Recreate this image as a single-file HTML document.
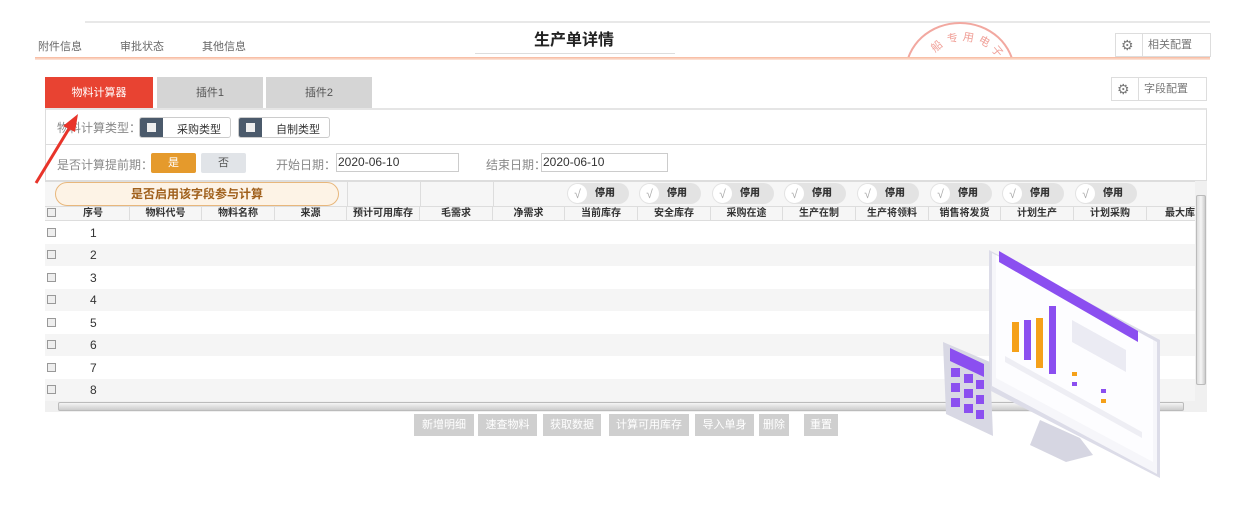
<!DOCTYPE html>
<html><head><meta charset="utf-8"><style>
*{margin:0;padding:0;box-sizing:border-box}
body{width:1235px;height:519px;background:#fff;position:relative;overflow:hidden;font-family:"Liberation Sans","Noto Sans CJK SC",sans-serif;font-size:11px;color:#333}
.a{position:absolute}
.nav{top:38px;color:#666;font-size:11px}
.tab{top:77px;height:32px;line-height:32px;text-align:center;font-size:11px}
.th{position:absolute;top:206px;height:15px;line-height:15px;font-weight:bold;font-size:10px;text-align:center;border-right:1px solid #ddd}
.tg{position:absolute;top:183px;width:62px;height:21px;border-radius:11px;background:#e3e3e3;font-weight:bold;font-size:10px;line-height:21px}
.tg i{position:absolute;left:1px;top:1px;width:19px;height:19px;border-radius:50%;background:#fff;color:#aaa;font-style:normal;text-align:center;font-weight:normal;font-size:12px}
.tg b{position:absolute;left:28px}
.btn{position:absolute;top:414px;height:22px;line-height:22px;background:#cfcfcf;color:#fff;text-align:center;font-size:11px}
.cb{position:absolute;left:47px;width:9px;height:9px;border:1px solid #999;background:#eee}
</style></head><body>
<div class="a" style="left:85px;top:21px;width:1125px;height:2px;background:#e8e8e8"></div>
<div class="a nav" style="left:38px">附件信息</div>
<div class="a nav" style="left:120px">审批状态</div>
<div class="a nav" style="left:202px">其他信息</div>
<div class="a" style="left:534px;top:26px;font-size:16px;font-weight:bold;color:#222">生产单详情</div>
<div class="a" style="left:475px;top:53px;width:200px;height:1px;background:#ddd"></div>
<div class="a" style="left:905px;top:22px;width:110px;height:100px;border:2px solid #f2a8a0;border-radius:50%;clip-path:inset(0 0 64px 0);color:#f0a098;font-size:11px">
<span style="position:absolute;left:24px;top:14px;transform:rotate(-40deg)">船</span><span style="position:absolute;left:40px;top:6px;transform:rotate(-15deg)">专</span><span style="position:absolute;left:56px;top:5px;transform:rotate(10deg)">用</span><span style="position:absolute;left:72px;top:9px;transform:rotate(30deg)">电</span><span style="position:absolute;left:85px;top:19px;transform:rotate(50deg)">子</span></div>
<div class="a" style="left:35px;top:57px;width:1175px;height:3px;background:linear-gradient(#f7b79c,#fde8de)"></div>
<div class="a" style="left:1115px;top:33px;width:96px;height:24px;border:1px solid #ddd;color:#777;line-height:22px"><span style="position:absolute;left:5px;font-size:14px">⚙</span><span style="position:absolute;left:26px;border-left:1px solid #ddd;padding-left:5px">相关配置</span></div>
<div class="a tab" style="left:45px;width:108px;background:#e84332;color:#fff">物料计算器</div>
<div class="a tab" style="left:157px;width:106px;background:#d5d5d5;color:#555">插件1</div>
<div class="a tab" style="left:266px;width:106px;background:#d5d5d5;color:#555">插件2</div>
<div class="a" style="left:1111px;top:77px;width:96px;height:24px;border:1px solid #ddd;color:#777;line-height:22px"><span style="position:absolute;left:5px;font-size:14px">⚙</span><span style="position:absolute;left:26px;border-left:1px solid #ddd;padding-left:5px">字段配置</span></div>
<div class="a" style="left:45px;top:108px;width:1162px;height:73px;border:1px solid #ddd;border-top:2px solid #e5e5e5"></div>
<div class="a" style="left:45px;top:144px;width:1162px;height:1px;background:#ddd"></div>
<div class="a" style="left:57px;top:119px;color:#888;font-size:12px">物料计算类型：</div>
<div class="a" style="left:139px;top:117px;width:92px;height:21px;border:1px solid #ccc;border-radius:3px;background:#fff"><div style="position:absolute;left:0;top:0;width:23px;height:19px;background:#4b5a6b;border-radius:2px 0 0 2px"><div style="margin:5px 7px;width:9px;height:9px;background:#eee"></div></div><span style="position:absolute;left:37px;top:3px">采购类型</span></div>
<div class="a" style="left:238px;top:117px;width:92px;height:21px;border:1px solid #ccc;border-radius:3px;background:#fff"><div style="position:absolute;left:0;top:0;width:23px;height:19px;background:#4b5a6b;border-radius:2px 0 0 2px"><div style="margin:5px 7px;width:9px;height:9px;background:#eee"></div></div><span style="position:absolute;left:37px;top:3px">自制类型</span></div>
<div class="a" style="left:57px;top:156px;color:#888;font-size:12px">是否计算提前期：</div>
<div class="a" style="left:151px;top:153px;width:45px;height:20px;background:#e59a2c;color:#fff;text-align:center;line-height:20px;border-radius:2px">是</div>
<div class="a" style="left:201px;top:153px;width:45px;height:20px;background:#e1e4e8;color:#555;text-align:center;line-height:20px;border-radius:2px">否</div>
<div class="a" style="left:276px;top:156px;color:#888;font-size:12px">开始日期：</div>
<div class="a" style="left:336px;top:153px;width:123px;height:19px;border:1px solid #ccc;font-size:12px;line-height:17px;padding-left:1px">2020-06-10</div>
<div class="a" style="left:486px;top:156px;color:#888;font-size:12px">结束日期：</div>
<div class="a" style="left:541px;top:153px;width:127px;height:19px;border:1px solid #ccc;font-size:12px;line-height:17px;padding-left:1px">2020-06-10</div>
<div class="a" style="left:45px;top:181px;width:1162px;height:40px;background:#f6f6f6;border-top:1px solid #ddd;border-bottom:1px solid #ddd"></div>
<div class="a" style="left:45px;top:206px;width:1150px;height:1px;background:#ddd"></div>
<div class="a" style="left:55px;top:182px;width:284px;height:24px;border:1px solid #e8b77c;border-radius:12px;background:#fdf3e6;color:#a0601c;font-weight:bold;font-size:12px;text-align:center;line-height:22px">是否启用该字段参与计算</div>
<div class="cb" style="top:208px"></div>
<div class="th" style="left:57px;width:73px">序号</div>
<div class="th" style="left:130px;width:72px">物料代号</div>
<div class="th" style="left:202px;width:73px">物料名称</div>
<div class="th" style="left:275px;width:72px">来源</div>
<div class="th" style="left:347px;width:73px">预计可用库存</div>
<div class="th" style="left:420px;width:73px">毛需求</div>
<div class="th" style="left:493px;width:72px">净需求</div>
<div class="th" style="left:565px;width:73px">当前库存</div>
<div class="th" style="left:638px;width:73px">安全库存</div>
<div class="th" style="left:711px;width:72px">采购在途</div>
<div class="th" style="left:783px;width:73px">生产在制</div>
<div class="th" style="left:856px;width:73px">生产将领料</div>
<div class="th" style="left:929px;width:72px">销售将发货</div>
<div class="th" style="left:1001px;width:73px">计划生产</div>
<div class="th" style="left:1074px;width:73px">计划采购</div>
<div class="th" style="left:1147px;width:48px;text-align:right;border:none">最大库</div>
<div class="a" style="left:347px;top:182px;width:1px;height:24px;background:#ddd"></div>
<div class="a" style="left:420px;top:182px;width:1px;height:24px;background:#ddd"></div>
<div class="a" style="left:493px;top:182px;width:1px;height:24px;background:#ddd"></div>
<div class="tg" style="left:567px"><i>√</i><b>停用</b></div>
<div class="tg" style="left:639px"><i>√</i><b>停用</b></div>
<div class="tg" style="left:712px"><i>√</i><b>停用</b></div>
<div class="tg" style="left:784px"><i>√</i><b>停用</b></div>
<div class="tg" style="left:857px"><i>√</i><b>停用</b></div>
<div class="tg" style="left:930px"><i>√</i><b>停用</b></div>
<div class="tg" style="left:1002px"><i>√</i><b>停用</b></div>
<div class="tg" style="left:1075px"><i>√</i><b>停用</b></div>
<div class="a" style="left:45px;top:244px;width:1150px;height:22px;background:#f5f5f5"></div>
<div class="a" style="left:45px;top:289px;width:1150px;height:22px;background:#f5f5f5"></div>
<div class="a" style="left:45px;top:334px;width:1150px;height:22px;background:#f5f5f5"></div>
<div class="a" style="left:45px;top:379px;width:1150px;height:22px;background:#f5f5f5"></div>
<div class="cb" style="top:228px"></div><div class="a" style="left:90px;top:226px;font-size:12px">1</div>
<div class="cb" style="top:250px"></div><div class="a" style="left:90px;top:248px;font-size:12px">2</div>
<div class="cb" style="top:273px"></div><div class="a" style="left:90px;top:271px;font-size:12px">3</div>
<div class="cb" style="top:295px"></div><div class="a" style="left:90px;top:293px;font-size:12px">4</div>
<div class="cb" style="top:318px"></div><div class="a" style="left:90px;top:316px;font-size:12px">5</div>
<div class="cb" style="top:340px"></div><div class="a" style="left:90px;top:338px;font-size:12px">6</div>
<div class="cb" style="top:363px"></div><div class="a" style="left:90px;top:361px;font-size:12px">7</div>
<div class="cb" style="top:385px"></div><div class="a" style="left:90px;top:383px;font-size:12px">8</div>
<div class="a" style="left:1195px;top:181px;width:12px;height:220px;background:#f0f0f0"></div>
<div class="a" style="left:1196px;top:195px;width:10px;height:190px;background:linear-gradient(90deg,#ddd,#f5f5f5,#ccc);border:1px solid #bbb;border-radius:2px"></div>
<div class="a" style="left:45px;top:401px;width:1162px;height:11px;background:#f0f0f0"></div>
<div class="a" style="left:58px;top:402px;width:1126px;height:9px;background:linear-gradient(#f5f5f5,#ccc);border:1px solid #bbb;border-radius:2px"></div>
<div class="btn" style="left:414px;width:60px">新增明细</div>
<div class="btn" style="left:478px;width:59px">速查物料</div>
<div class="btn" style="left:543px;width:58px">获取数据</div>
<div class="btn" style="left:609px;width:80px">计算可用库存</div>
<div class="btn" style="left:695px;width:59px">导入单身</div>
<div class="btn" style="left:759px;width:30px">删除</div>
<div class="btn" style="left:804px;width:34px">重置</div>
<svg class="a" style="left:0;top:0" width="1235" height="519">
<line x1="36" y1="183" x2="70" y2="127" stroke="#e8342a" stroke-width="3"/>
<polygon points="78,114 63,126 75,132" fill="#e8342a"/>
<polygon points="989,250 1160,340 1160,478 989,390" fill="#dcdce8"/>
<polygon points="992,253 1157,342 1157,474 992,386" fill="#f6f6fa"/>
<polygon points="996,255 1153,340 1153,462 996,378" fill="#fdfdff"/>
<polygon points="999,251 1138,331 1138,342 999,262" fill="#8b4ff0"/>
<polygon points="1005,362 1142,438 1142,432 1005,356" fill="#eeeef4"/>
<polygon points="1040,420 1080,438 1093,455 1066,462 1030,445" fill="#d6d6e2"/>
<rect x="1012" y="322" width="7" height="30" fill="#f5a11a"/>
<rect x="1024" y="320" width="7" height="40" fill="#8b4ff0"/>
<rect x="1036" y="318" width="7" height="50" fill="#f5a11a"/>
<rect x="1049" y="306" width="7" height="68" fill="#8b4ff0"/>
<polygon points="1072,320 1126,350 1126,372 1072,342" fill="#ebebf3"/>
<rect x="1072" y="372" width="5" height="4" fill="#f5a11a"/><rect x="1072" y="382" width="5" height="4" fill="#8b4ff0"/>
<rect x="1101" y="389" width="5" height="4" fill="#8b4ff0"/><rect x="1101" y="399" width="5" height="4" fill="#f5a11a"/>
<polygon points="943,342 990,362 993,436 946,414" fill="#d8d8e4"/>
<polygon points="950,348 984,364 984,377 950,361" fill="#8b4ff0"/>
<g fill="#8b4ff0"><rect x="951" y="368" width="9" height="9"/><rect x="964" y="374" width="9" height="9"/><rect x="976" y="380" width="8" height="9"/>
<rect x="951" y="383" width="9" height="9"/><rect x="964" y="389" width="9" height="9"/><rect x="976" y="395" width="8" height="9"/>
<rect x="951" y="398" width="9" height="9"/><rect x="964" y="404" width="9" height="9"/><rect x="976" y="410" width="8" height="9"/></g>
</svg>
</body></html>
